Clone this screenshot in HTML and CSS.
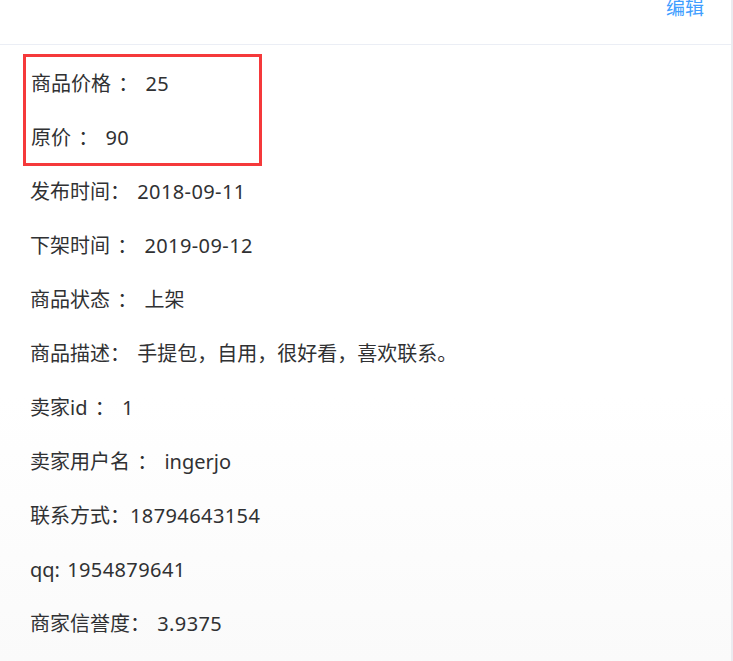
FILE: index.html
```html
<!DOCTYPE html>
<html lang="zh">
<head>
<meta charset="utf-8">
<title>商品详情</title>
<link rel="stylesheet" href="styles.css">
</head>
<body>
<div class="card">
  <div class="card-header">
    <a class="edit-link" href="#">编辑</a>
  </div>
  <div class="card-body">
    <div class="highlight">
      <p class="row">商品价格 ： <span class="val">25</span></p>
      <p class="row">原价 ： <span class="val">90</span></p>
    </div>
    <div class="list">
      <p class="row">发布时间： <span class="val">2018-09-11</span></p>
      <p class="row">下架时间 ： <span class="val">2019-09-12</span></p>
      <p class="row">商品状态 ： 上架</p>
      <p class="row">商品描述： 手提包，自用，很好看，喜欢联系。</p>
      <p class="row">卖家id ： <span class="val">1</span></p>
      <p class="row">卖家用户名 ： ingerjo</p>
      <p class="row">联系方式：<span class="val">18794643154</span></p>
      <p class="row">qq: <span class="val">1954879641</span></p>
      <p class="row">商家信誉度： <span class="val">3.9375</span></p>
    </div>
  </div>
</div>
</body>
</html>
```
FILE: styles.css
```css
html, body {
  margin: 0;
  padding: 0;
  background: #ffffff;
}

body {
  font-family: "Noto Sans", "Noto Sans CJK SC", sans-serif;
  color: #303133;
  overflow: hidden;
}

.card {
  width: 731px;
  height: 661px;
  border-right: 2px solid #ebebf0;
  background: linear-gradient(#ffffff 60%, #fafafa);
  box-sizing: content-box;
}

.card-header {
  height: 44px;
  border-bottom: 1px solid #ebeef5;
  display: flex;
  justify-content: flex-end;
  align-items: flex-start;
  padding-right: 27px;
}

.edit-link {
  font-size: 19px;
  line-height: 16px;
  color: #409eff;
  text-decoration: none;
}

.card-body {
  padding: 9px 0 0 23px;
}

.row {
  margin: 0;
  font-size: 20px;
  line-height: 34px;
  white-space: pre;
  word-spacing: 2px;
}

.val {
  letter-spacing: 0.4px;
}

.highlight {
  width: 228px;
  border: 3px solid #f5393b;
  padding: 10px 0 8px 5px;
  display: flex;
  flex-direction: column;
  gap: 20px;
  margin-bottom: 9px;
}

.list {
  display: flex;
  flex-direction: column;
  gap: 20px;
  padding-left: 7px;
}
```
